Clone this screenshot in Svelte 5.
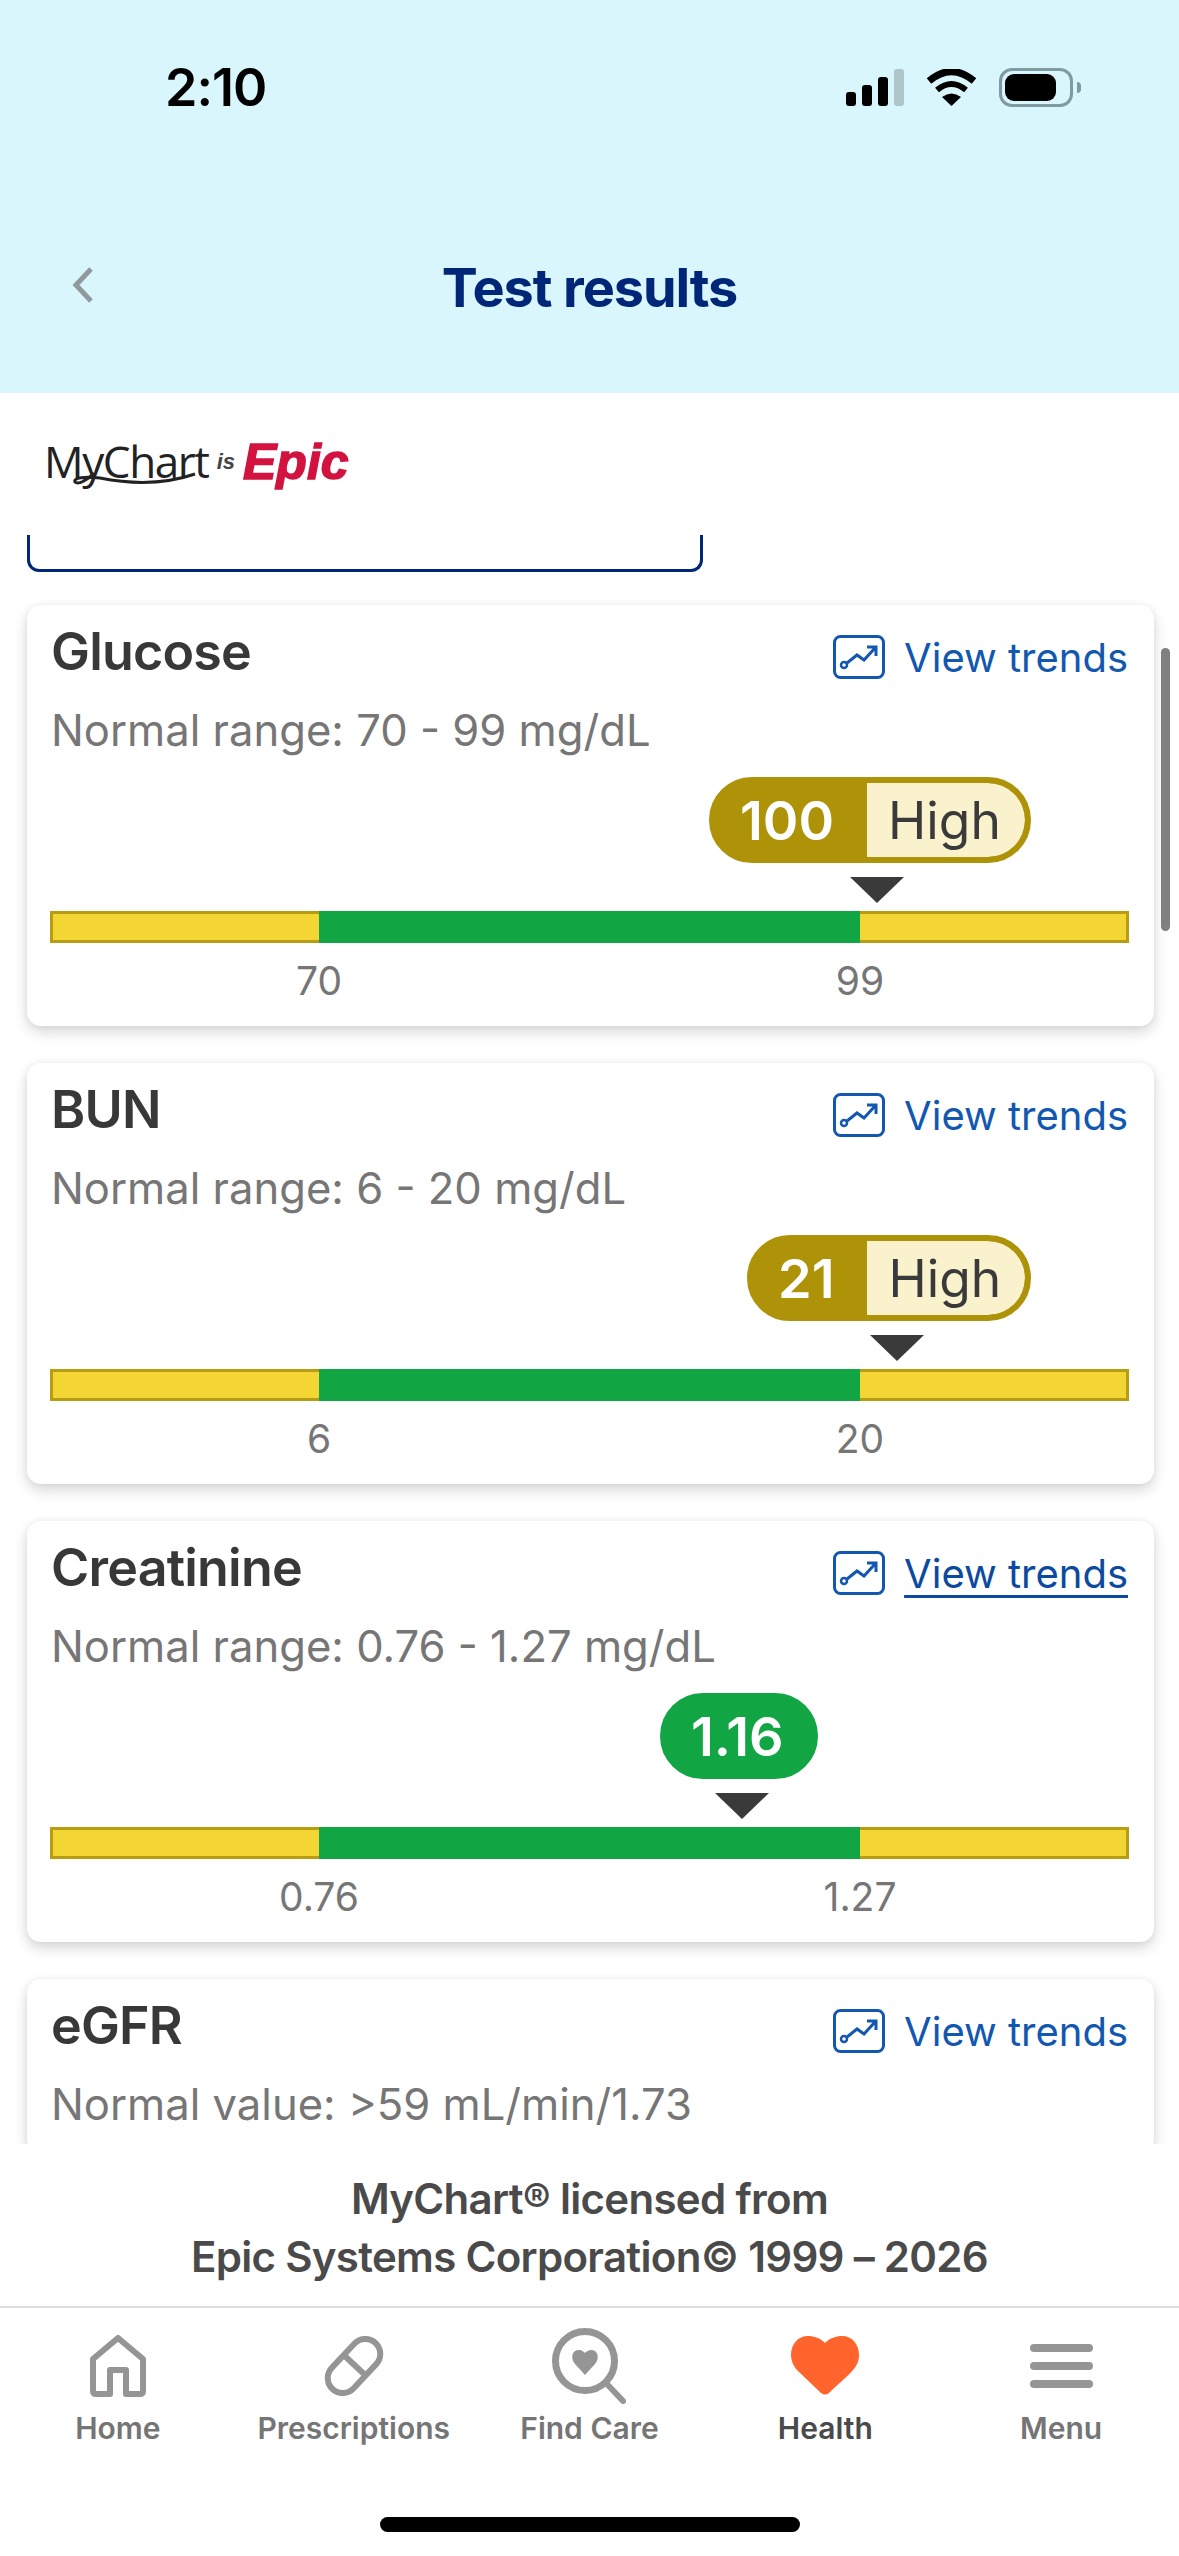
<script>
	const results = [
		{ name: 'Glucose', range: 'Normal range: 70 - 99 mg/dL', value: '100', flag: 'High', pillX: 659, markX: 827, low: '70', high: '99' },
		{ name: 'BUN', range: 'Normal range: 6 - 20 mg/dL', value: '21', flag: 'High', pillX: 697, markX: 847, low: '6', high: '20' },
		{ name: 'Creatinine', range: 'Normal range: 0.76 - 1.27 mg/dL', value: '1.16', flag: '', pillX: 610, markX: 692, low: '0.76', high: '1.27', hovered: true },
		{ name: 'eGFR', range: 'Normal value: >59 mL/min/1.73', value: '', flag: '', pillX: 0, markX: 0, low: '', high: '' }
	];

	const tabs = ['Home', 'Prescriptions', 'Find Care', 'Health', 'Menu'];
</script>

<div class="screen">
	<header class="top">
		<div class="status">
			<span class="time">2:10</span>
			<div class="status-icons">
				<div class="signal">
					<i class="s1"></i><i class="s2"></i><i class="s3"></i><i class="s4"></i>
				</div>
				<svg class="wifi" width="51" height="37" viewBox="0 0 51 37">
					<path d="M3 12 Q25.5 -7 48 12" fill="none" stroke="#000" stroke-width="7" />
					<path d="M11 21 Q25.5 9 40 21" fill="none" stroke="#000" stroke-width="6" />
					<path d="M25.5 37 L16 28 Q25.5 21 35 28 Z" fill="#000" />
				</svg>
				<div class="battery"><div class="charge"></div></div>
				<div class="nub"></div>
			</div>
		</div>
		<div class="nav">
			<svg class="back" width="22" height="36" viewBox="0 0 22 36">
				<path d="M19 2 L4 18 L19 34" fill="none" stroke="#8f9a9e" stroke-width="5" />
			</svg>
			<h1>Test results</h1>
		</div>
	</header>

	<div class="logo">
		<span class="mychart">MyChart</span>
		<span class="is">is</span>
		<span class="epic">Epic</span>
		<svg class="swoosh" width="130" height="24" viewBox="0 0 130 24">
			<path d="M24 8 C18 15 8 20 5 17 C3 13 14 11 30 13 C55 18 90 21 125 9" fill="none" stroke="#222" stroke-width="3" />
		</svg>
	</div>

	<main class="scroller">
		<div class="stub"></div>
		{#each results as r}
			<section class="card">
				<div class="head">
					<h2>{r.name}</h2>
					<a class="trends" class:hovered={r.hovered} href="#trends">
						<svg width="52" height="44" viewBox="0 0 52 44">
							<rect x="1.5" y="1.5" width="49" height="41" rx="6" fill="none" stroke="#1257b0" stroke-width="3" />
							<circle cx="11" cy="30" r="3" fill="none" stroke="#1257b0" stroke-width="2.5" />
							<path d="M14 28 L24 20 L31 25 L42 13 M34 12 H43 V21" fill="none" stroke="#1257b0" stroke-width="3" />
						</svg>
						<span>View trends</span>
					</a>
				</div>
				<p class="range">{r.range}</p>
				{#if r.value}
					<div class="pill-row">
						<div class="pill" class:ok={!r.flag} style="margin-left: {r.pillX}px">
							<span class="num">{r.value}</span>
							{#if r.flag}<span class="flag">{r.flag}</span>{/if}
						</div>
					</div>
					<div class="marker" style="margin-left: {r.markX - 27}px"></div>
					<div class="bar">
						<div class="zone"></div>
						<div class="zone good"></div>
						<div class="zone"></div>
					</div>
					<div class="limits">
						<span>{r.low}</span>
						<span>{r.high}</span>
					</div>
				{/if}
			</section>
		{/each}
		<div class="scrollbar"></div>
	</main>

	<div class="license">
		<p>MyChart® licensed from</p>
		<p>Epic Systems Corporation© 1999 – 2026</p>
	</div>

	<nav class="tabs">
		{#each tabs as tab, i}
			<div class="tab" class:active={i === 3}>
				<div class="tab-icon">
					{#if i === 0}
						<svg width="56" height="62" viewBox="0 0 56 62">
							<path d="M28 3 L53 24 V56 Q53 59 50 59 H36 V35 H20 V59 H6 Q3 59 3 56 V24 Z" fill="none" stroke="#959595" stroke-width="6" stroke-linejoin="round" />
						</svg>
					{:else if i === 1}
						<svg width="60" height="60" viewBox="0 0 60 60">
							<g transform="rotate(-47 30 30)">
								<rect x="-1.5" y="15" width="63" height="30" rx="15" fill="none" stroke="#959595" stroke-width="6" />
								<path d="M31 15 V45" stroke="#959595" stroke-width="6" />
							</g>
						</svg>
					{:else if i === 2}
						<svg width="74" height="76" viewBox="0 0 74 76">
							<circle cx="33" cy="33" r="29.5" fill="none" stroke="#959595" stroke-width="7" />
							<path d="M54 55 L71 73" stroke="#959595" stroke-width="6" stroke-linecap="round" />
							<path d="M33 47 L23 36 C18 30 20 22 27 22 C30 22 32 24 33 25 C34 24 36 22 39 22 C46 22 48 30 43 36 Z" fill="#959595" />
						</svg>
					{:else if i === 3}
						<svg width="68" height="59" viewBox="0 0 68 59">
							<path d="M34 7 C29 2 23 0 17 0 C7 0 0 8 0 19 C0 25 3 31 7 35 L30 57 Q34 60 38 57 C46 49 56 41 62 34 C66 29 68 25 68 19 C68 8 61 0 51 0 C45 0 39 2 34 7 Z" fill="#ff642d" />
						</svg>
					{:else}
						<div class="burger"><i></i><i></i><i></i></div>
					{/if}
				</div>
				<span>{tab}</span>
			</div>
		{/each}
	</nav>

	<div class="home-bar"><div></div></div>
</div>

<style>
	:global(body) {
		margin: 0;
		background: #fff;
	}

	.screen {
		width: 1179px;
		height: 2556px;
		display: flex;
		flex-direction: column;
		overflow: hidden;
		background: #fff;
		font-family: Inter, 'Noto Sans', sans-serif;
	}

	.top {
		height: 393px;
		flex: none;
		background: #d8f6fb;
	}

	.status {
		height: 176px;
		box-sizing: border-box;
		padding: 58px 98px 0 165px;
		display: flex;
		justify-content: space-between;
		align-items: flex-start;
	}

	.time {
		font-size: 52px;
		font-weight: 600;
		line-height: 60px;
		color: #000;
		letter-spacing: -1px;
	}

	.status-icons {
		display: flex;
		align-items: center;
		margin-top: 10px;
	}

	.signal {
		display: flex;
		align-items: flex-end;
		gap: 6px;
		height: 37px;
	}

	.signal i {
		display: block;
		width: 10px;
		background: #000;
		border-radius: 3px;
	}

	.s1 { height: 14px; }
	.s2 { height: 21px; }
	.s3 { height: 29px; }
	.signal .s4 { height: 37px; background: #aec5ca; }

	.wifi {
		margin-left: 22px;
	}

	.battery {
		margin-left: 22px;
		width: 74px;
		height: 39px;
		box-sizing: border-box;
		border: 3px solid #7f9aa1;
		border-radius: 13px;
		padding: 3px;
	}

	.charge {
		width: 51px;
		height: 27px;
		background: #000;
		border-radius: 9px;
	}

	.nub {
		width: 4px;
		height: 11px;
		margin-left: 4px;
		background: #7f9aa1;
		border-radius: 0 6px 6px 0;
	}

	.nav {
		position: relative;
		height: 80px;
		margin-top: 71px;
		display: flex;
		align-items: center;
		justify-content: center;
	}

	.back {
		position: absolute;
		left: 72px;
		top: 20px;
	}

	h1 {
		margin: 0;
		font-size: 54px;
		font-weight: 700;
		letter-spacing: -1.1px;
		color: #002677;
	}

	.logo {
		position: relative;
		height: 142px;
		flex: none;
		box-sizing: border-box;
		padding: 42px 0 0 44px;
		display: flex;
		align-items: flex-start;
	}

	.mychart {
		font-family: 'Open Sans', sans-serif;
		font-size: 44px;
		line-height: 52px;
		letter-spacing: -1.4px;
		color: #222;
	}

	.is {
		margin: 12px 0 0 8px;
		font-family: 'Liberation Sans', sans-serif;
		font-size: 22px;
		line-height: 30px;
		font-weight: 700;
		font-style: italic;
		color: #444;
	}

	.epic {
		margin-left: 8px;
		font-family: 'Liberation Sans', sans-serif;
		font-size: 50px;
		line-height: 54px;
		font-weight: 700;
		font-style: italic;
		color: #d2133f;
		-webkit-text-stroke: 1.5px #d2133f;
	}

	.swoosh {
		position: absolute;
		left: 70px;
		top: 72px;
	}

	.scroller {
		position: relative;
		flex: 1 1 0;
		min-height: 0;
		overflow: hidden;
	}

	.stub {
		width: 676px;
		height: 37px;
		margin: 0 0 33px 27px;
		box-sizing: border-box;
		border: 3px solid #002677;
		border-top: none;
		border-radius: 0 0 12px 12px;
	}

	.card {
		width: 1127px;
		margin: 0 0 37px 27px;
		box-sizing: border-box;
		padding: 22px 25px 20px 23px;
		background: #fff;
		border-radius: 14px;
		box-shadow: 0 6px 14px rgba(0, 0, 0, 0.16), 0 0 6px rgba(0, 0, 0, 0.05);
	}

	.head {
		display: flex;
		justify-content: space-between;
		align-items: flex-start;
		height: 60px;
	}

	h2 {
		margin: -5px 0 0 1px;
		font-size: 52px;
		line-height: 60px;
		font-weight: 600;
		letter-spacing: -0.8px;
		color: #383838;
	}

	.trends {
		display: flex;
		align-items: center;
		gap: 19px;
		margin-top: 8px;
		height: 44px;
		padding-right: 1px;
		font-size: 40px;
		color: #1257b0;
		text-decoration: none;
	}

	.trends.hovered span {
		color: #0b4a9e;
		text-decoration: underline;
		text-underline-offset: 7px;
		text-decoration-thickness: 3px;
	}

	.range {
		margin: 16px 0 0 1px;
		font-size: 43.6px;
		line-height: 56px;
		color: #767676;
	}

	.pill-row {
		margin-top: 18px;
		height: 86px;
	}

	.pill {
		display: inline-flex;
		height: 86px;
		box-sizing: border-box;
		border: 6px solid #ae9208;
		border-radius: 43px;
		background: #ae9208;
		overflow: hidden;
	}

	.pill.ok {
		background: #12a544;
		border-color: #12a544;
	}

	.num {
		display: flex;
		align-items: center;
		padding: 0 33px 0 25px;
		font-size: 54px;
		font-weight: 600;
		color: #fff;
	}

	.pill.ok .num {
		padding: 0 28px 0 25px;
	}

	.flag {
		display: flex;
		align-items: center;
		padding: 0 24px 0 21px;
		background: #faf2cd;
		border-radius: 0 37px 37px 0;
		font-size: 51.5px;
		color: #3a3a3a;
	}

	.marker {
		width: 0;
		height: 0;
		margin-top: 14px;
		border-left: 27px solid transparent;
		border-right: 27px solid transparent;
		border-top: 26px solid #3a3a3a;
	}

	.bar {
		display: grid;
		grid-template-columns: 269px 541px 269px;
		margin-top: 8px;
		height: 32px;
	}

	.zone {
		box-sizing: border-box;
		background: #f3d534;
		border: 3px solid #b89d12;
	}

	.zone:first-child {
		border-right: none;
	}

	.zone:last-child {
		border-left: none;
	}

	.zone.good {
		background: #12a544;
		border: none;
	}

	.limits {
		display: flex;
		justify-content: space-between;
		margin-top: 13px;
		padding: 0 169px;
		font-size: 39px;
		line-height: 50px;
		color: #767676;
	}

	.limits span {
		width: 200px;
		text-align: center;
	}

	.scrollbar {
		position: absolute;
		top: 113px;
		right: 9px;
		width: 9px;
		height: 283px;
		border-radius: 5px;
		background: #808080;
	}

	.license {
		height: 164px;
		flex: none;
		box-sizing: border-box;
		padding-top: 26px;
		background: #fff;
		border-bottom: 2px solid #ddd;
		text-align: center;
		font-size: 42px;
		font-weight: 600;
		line-height: 58px;
		letter-spacing: -0.7px;
		color: #4a4a4a;
	}

	.license p {
		margin: 0;
	}

	.tabs {
		display: grid;
		grid-template-columns: repeat(5, 1fr);
		flex: none;
		height: 209px;
		box-sizing: border-box;
		padding-top: 15px;
	}

	.tab {
		display: flex;
		flex-direction: column;
		align-items: center;
		font-size: 30px;
		font-weight: 600;
		line-height: 40px;
		color: #757575;
	}

	.tab.active {
		color: #4a4a4a;
	}

	.tab-icon {
		height: 85px;
		display: flex;
		align-items: center;
		justify-content: center;
	}

	.burger {
		display: flex;
		flex-direction: column;
		gap: 10px;
	}

	.burger i {
		display: block;
		width: 63px;
		height: 8px;
		border-radius: 4px;
		background: #959595;
	}

	.home-bar {
		flex: none;
		height: 39px;
		display: flex;
		justify-content: center;
	}

	.home-bar div {
		width: 420px;
		height: 15px;
		border-radius: 8px;
		background: #000;
	}
</style>
